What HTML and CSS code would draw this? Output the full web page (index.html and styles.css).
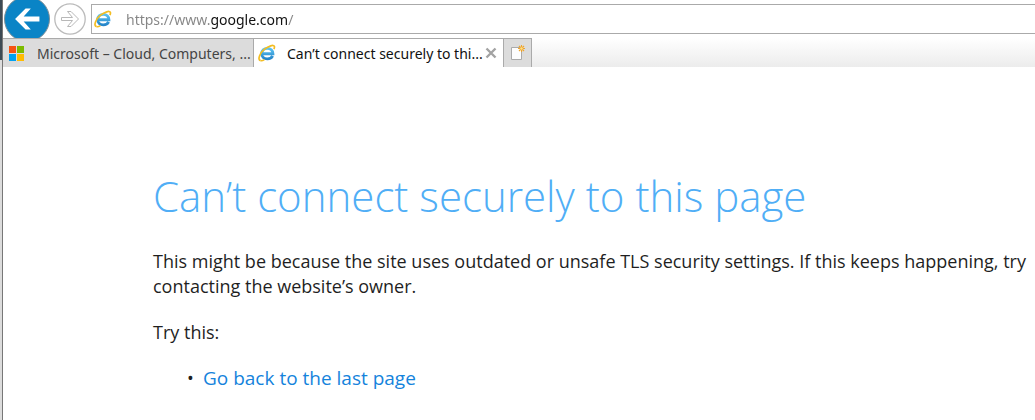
FILE: index.html
```html
<!DOCTYPE html>
<html lang="en">
<head>
<meta charset="utf-8">
<title>Can’t connect securely to this page</title>
<link rel="stylesheet" href="styles.css">
</head>
<body>
<svg class="defs" width="0" height="0" aria-hidden="true">
  <defs>
    <linearGradient id="blue" x1="0" y1="0" x2="0" y2="1"><stop offset="0" stop-color="#5cc3f2"/><stop offset="1" stop-color="#2585c9"/></linearGradient>
    <symbol id="ie" viewBox="0 0 18 18">
      <path d="M14.600 11.900C13.600 14 11.600 14.900 9.300 14.900C6 14.900 3.700 12.800 3.700 9.700C3.700 6.500 6 4.400 9.300 4.400C12.600 4.400 14.800 6.500 14.900 9.700H5" fill="none" stroke="url(#blue)" stroke-width="2.900"/>
      <path d="M2.600 16.600C-1 15.800 2 8.800 6.500 5.200C10.500 2 15.800 .300 16.400 2.400C16.600 3.300 16.300 4.400 15.900 5.200" fill="none" stroke="#f3bd22" stroke-width="1.700"/>
      <path d="M2.600 16.600C3.800 16.900 5.300 16.300 6.400 15.600" fill="none" stroke="#f3bd22" stroke-width="1.400"/>
    </symbol>
  </defs>
</svg>
<div class="window">
  <header class="toolbar">
    <button class="back" type="button" aria-label="Back"><svg viewBox="0 0 46 46"><path d="M10.500 23L21.500 12H27L19.500 20.500H36V25.500H19.500L27 34H21.500Z" fill="#fff"/></svg></button>
    <button class="forward" type="button" aria-label="Forward" disabled><svg viewBox="0 0 32 32"><circle cx="16" cy="16" r="15.200" fill="#fff" stroke="#bbb" stroke-width="1.300"/><path d="M7.500 14.500H18.500L13.500 8.500H17L24.500 16L17 23.500H13.500L18.500 17.500H7.500Z" fill="#fff" stroke="#b8b8b8"/></svg></button>
    <div class="address">
      <svg class="ie"><use href="#ie"/></svg>
      <input class="url" type="text" aria-label="Address" value="https://www.google.com/">
    </div>
  </header>
  <nav class="tabs" aria-label="Tabs">
    <button class="tab" type="button"><svg class="ms" viewBox="0 0 15 15"><path d="M0 0h7v7H0z" fill="#f65314"/><path d="M8 0h7v7H8z" fill="#7cbb00"/><path d="M0 8h7v7H0z" fill="#00a1f1"/><path d="M8 8h7v7H8z" fill="#ffbb00"/></svg><span>Microsoft – Cloud, Computers, ...</span></button>
    <div class="tab active"><svg class="ie"><use href="#ie"/></svg><span>Can’t connect securely to thi...</span><button class="close" type="button" aria-label="Close tab"><svg viewBox="0 0 12 12"><path d="M1.500 1.500L10.500 10.500M10.500 1.500L1.500 10.500" stroke="#a3a3a3" stroke-width="2.400"/></svg></button></div>
    <button class="new" type="button" aria-label="New tab"><svg viewBox="0 0 15 16"><path d="M1.500 2.500H11.500V14.500H1.500Z" fill="#fdfdfd" stroke="#aaa"/><path d="M11.500 0V7M8 3.500H15M9 1L14 6M14 1L9 6" stroke="#efa52d" stroke-width="1.100"/><circle cx="11.500" cy="3.500" r="1.200" fill="#ffe28a"/></svg></button>
  </nav>
  <main class="page">
    <h1>Can’t connect securely to this page</h1>
    <p>This might be because the site uses outdated or unsafe TLS security settings. If this keeps happening, try contacting the website’s owner.</p>
    <p>Try this:</p>
    <ul><li><a href="#">Go back to the last page</a></li></ul>
  </main>
</div>
</body>
</html>
```
FILE: styles.css
```css
*, *::before { box-sizing: border-box; }
body {
  margin: 0;
  background: #fff;
  color: #1f1f1f;
  font-family: "Noto Sans", "Open Sans", sans-serif;
}
button { border: 0; padding: 0; background: none; font: inherit; color: inherit; }
svg { display: block; }
.defs { position: absolute; }
.window {
  position: relative;
  min-height: 100vh;
  overflow: hidden;
  padding-left: 3px;
}
.window::before {
  content: "";
  position: absolute;
  left: 0;
  top: 0;
  bottom: 0;
  width: 3px;
  border-right: 1px solid #777;
  background: linear-gradient(#3d4a54 60px, #dcdcdc 60px);
}
.toolbar {
  display: flex;
  align-items: center;
  height: 38px;
}
.back {
  flex: none;
  width: 46px;
  height: 46px;
  margin: 0 4px 0 1px;
  border: 1px solid #7d8d96;
  border-radius: 50%;
  background: #0a84c6;
}
.back svg { width: 44px; height: 44px; }
.forward { flex: none; width: 32px; height: 32px; margin-right: 5px; }
.address {
  flex: 1;
  display: flex;
  align-items: center;
  height: 30px;
  border: 1px solid #aaa;
  border-right: 0;
  padding-left: 2px;
}
.ie { flex: none; width: 18px; height: 18px; }
.url {
  flex: 1;
  min-width: 0;
  margin-left: 14px;
  padding: 0;
  border: 0;
  outline: 0;
  font: 14px "Noto Sans", sans-serif;
  background: linear-gradient(90deg, #858585 84px, #111 84px 162px, #858585 162px);
  background-clip: text;
  -webkit-background-clip: text;
  -webkit-text-fill-color: transparent;
}
.tabs {
  position: relative;
  display: flex;
  height: 29px;
  background: linear-gradient(#fff, #ececec);
  font-size: 14px;
  white-space: nowrap;
}
.tab {
  display: flex;
  align-items: center;
  flex: none;
  width: 250px;
  padding-left: 6px;
  border-top: 1px solid #aaa;
  background: #dcdcdc;
  color: #444;
}
.tab + .tab { border-left: 1px solid #aaa; padding-left: 4px; }
.tab.active { background: #fff; color: #111; }
.ms { width: 15px; height: 15px; margin-right: 13px; }
.active .ie { margin-right: 11px; }
.close { margin: 0 6px 0 auto; }
.close svg { width: 12px; height: 12px; }
.new {
  display: flex;
  align-items: center;
  justify-content: center;
  flex: none;
  width: 29px;
  border: 1px solid #aaa;
  border-bottom: 0;
  background: #dcdcdc;
}
.new svg { width: 15px; height: 16px; }
.page {
  padding: 98px 0 0 150px;
  font: 18px/25px "Open Sans", "Noto Sans", sans-serif;
}
h1 {
  margin: 0 0 22px;
  color: #50aef6;
  font: 300 42px/62px "Open Sans", "Noto Sans", sans-serif;
}
p { margin: 0 0 21px; }
ul { margin: 0; padding-left: 50px; list-style: "•  "; }
a { color: #1583dc; font-size: 19px; text-decoration: none; }
```
